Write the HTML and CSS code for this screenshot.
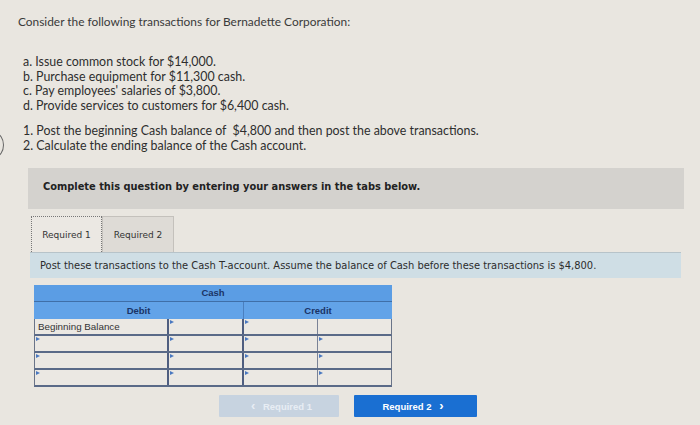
FILE: index.html
```html
<!DOCTYPE html>
<html>
<head>
<meta charset="utf-8">
<link rel="stylesheet" href="styles.css">
</head>
<body>
<div class="page">
  <p class="title">Consider the following transactions for Bernadette Corporation:</p>
  <div class="items">
    <div>a. Issue common stock for $14,000.</div>
    <div>b. Purchase equipment for $11,300 cash.</div>
    <div>c. Pay employees' salaries of $3,800.</div>
    <div>d. Provide services to customers for $6,400 cash.</div>
  </div>
  <div class="tasks">
    <div>1. Post the beginning Cash balance of &nbsp;$4,800 and then post the above transactions.</div>
    <div class="task2">2. Calculate the ending balance of the Cash account.</div>
  </div>

  <div class="notice">Complete this question by entering your answers in the tabs below.</div>

  <div class="tabs">
    <div class="tab active">Required 1</div>
    <div class="tab">Required 2</div>
  </div>
  <div class="instr">Post these transactions to the Cash T-account. Assume the balance of Cash before these transactions is $4,800.</div>

  <div class="taccount">
    <div class="hrow cash">Cash</div>
    <div class="hrow sides"><span class="side">Debit</span><span class="side">Credit</span></div>
    <div class="row">
      <div class="cell c1 label">Beginning Balance</div>
      <div class="cell c2 mark"></div>
      <div class="cell c3 mark"></div>
      <div class="cell c4"></div>
    </div>
    <div class="row">
      <div class="cell c1 mark"></div>
      <div class="cell c2 mark"></div>
      <div class="cell c3 mark"></div>
      <div class="cell c4 mark"></div>
    </div>
    <div class="row">
      <div class="cell c1 mark"></div>
      <div class="cell c2 mark"></div>
      <div class="cell c3 mark"></div>
      <div class="cell c4 mark"></div>
    </div>
    <div class="row">
      <div class="cell c1 mark"></div>
      <div class="cell c2 mark"></div>
      <div class="cell c3 mark"></div>
      <div class="cell c4 mark"></div>
    </div>
  </div>

  <div class="nav">
    <div class="btn prev"><span class="chev">&lsaquo;</span> Required 1</div>
    <div class="btn next">Required 2 <span class="chev">&rsaquo;</span></div>
  </div>
</div>
</body>
</html>
```
FILE: styles.css
```css
html, body {
  margin: 0;
  padding: 0;
}
body {
  width: 700px;
  height: 425px;
  overflow: hidden;
  background: #e9e6e0;
  color: #333;
}
.page {
  position: relative;
  padding-top: 14px;
}
.title {
  margin: 0 0 0 18px;
  font-family: Lato, "Open Sans", sans-serif;
  font-size: 11.9px;
  line-height: 16px;
  color: #3a3a3a;
}
.items, .tasks {
  margin-left: 23px;
  font-family: Lato, "Open Sans", sans-serif;
  font-size: 12.4px;
  line-height: 14.5px;
  color: #2e2e2e;
}
.items {
  margin-top: 25px;
}
.tasks {
  margin-top: 11px;
}
.tasks div {
  position: relative;
}
.task2::before {
  content: "";
  position: absolute;
  left: -36px;
  top: -6px;
  width: 15px;
  height: 22px;
  border: 1px solid #666;
  border-radius: 50%;
}
.notice {
  margin: 15px 0 0 28px;
  width: 656px;
  height: 41px;
  box-sizing: border-box;
  padding: 12px 0 0 15px;
  background: #d4d2ce;
  font-family: "DejaVu Sans", Verdana, sans-serif;
  font-weight: bold;
  font-size: 9.85px;
  line-height: 14px;
  color: #222;
}
.tabs {
  display: flex;
  margin: 7px 0 0 31px;
  height: 36px;
}
.tab {
  width: 72px;
  box-sizing: border-box;
  padding-top: 12px;
  text-align: center;
  font-family: "DejaVu Sans", Verdana, sans-serif;
  font-size: 9px;
  line-height: 12px;
  color: #333;
  background: #dedbd6;
  border: 1px solid #c4c1bc;
  border-bottom: none;
}
.tab.active {
  width: 71px;
  background: #ebe8e3;
  border: 1px dotted #777;
  border-bottom: none;
  position: relative;
  z-index: 1;
}
.instr {
  margin-left: 30px;
  width: 651px;
  height: 26px;
  box-sizing: border-box;
  padding: 7px 0 0 10px;
  background: #cfdee5;
  border-top: 1px solid #b7c3c9;
  font-family: "DejaVu Sans", Verdana, sans-serif;
  font-size: 9.92px;
  line-height: 12px;
  color: #2c2c2c;
}
.taccount {
  margin: 7px 0 0 34px;
  width: 358px;
  font-family: "Liberation Sans", Arial, sans-serif;
}
.hrow {
  height: 17px;
  background: #5b9de4;
  color: #1a3466;
  font-weight: bold;
  font-size: 9.5px;
  line-height: 17px;
  text-align: center;
}
.hrow.cash {
  height: 16px;
  line-height: 16px;
  border-bottom: 1px solid #3f6fa8;
}
.hrow.sides {
  display: flex;
  background: #62a3e8;
}
.side {
  flex: 0 0 210px;
  box-sizing: border-box;
  border-right: 1px solid #4a7fbf;
}
.side + .side {
  flex: 1;
  border-right: none;
}
.row {
  display: flex;
  height: 17px;
  box-sizing: border-box;
  border-bottom: 2px solid #5a6a88;
  border-left: 1px solid #6a7488;
  border-right: 1px solid #6a7488;
  background: #ebe8e3;
}
.cell {
  position: relative;
  box-sizing: border-box;
  height: 100%;
}
.c1 { width: 134px; border-right: 2px solid #4f5e80; }
.c2 { width: 75px; border-right: 2px solid #4f5e80; }
.c3 { width: 74px; border-right: 1px solid #7a8296; }
.c4 { flex: 1; }
.label {
  padding-left: 3px;
  font-size: 9.8px;
  line-height: 15px;
  color: #333;
}
.mark::before {
  content: "";
  position: absolute;
  left: 1px;
  top: 1px;
  border-left: 4px solid #4a78c0;
  border-top: 2.5px solid transparent;
  border-bottom: 2.5px solid transparent;
}
.nav {
  display: flex;
  gap: 15px;
  margin: 8px 0 0 219px;
}
.btn {
  height: 22px;
  box-sizing: border-box;
  font-family: "Liberation Sans", Arial, sans-serif;
  font-weight: bold;
  font-size: 9.5px;
  line-height: 22px;
  text-align: center;
  border-radius: 1px;
}
.prev {
  width: 120px;
  background: #c7d3e0;
  color: #e7edf4;
}
.next {
  width: 123px;
  background: #1a6fd2;
  color: #fff;
}
.chev {
  font-size: 13px;
  margin: 0 5px;
}
```
